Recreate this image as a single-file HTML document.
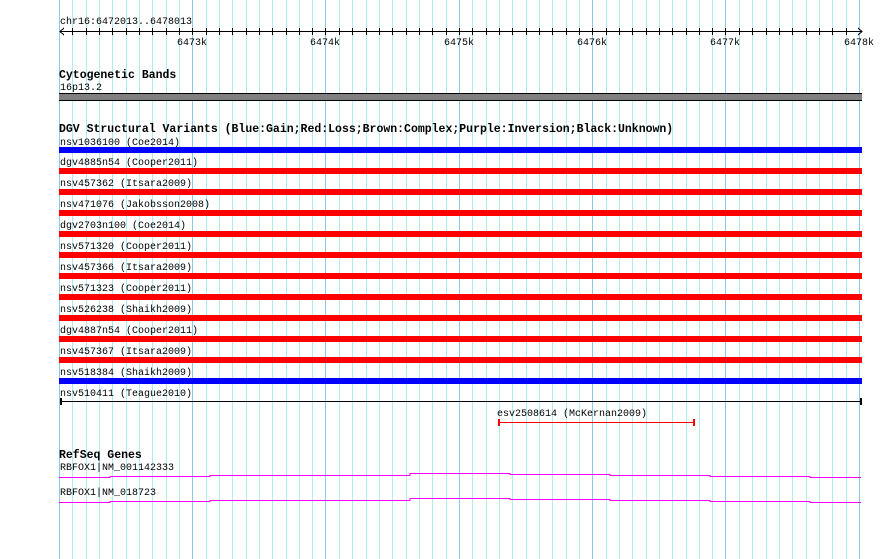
<!DOCTYPE html>
<html><head><meta charset="utf-8"><style>
html,body{margin:0;padding:0;background:#fff;width:890px;height:559px;overflow:hidden}
svg{display:block}
text{font-family:"Liberation Mono","DejaVu Sans Mono",monospace;font-size:10px;fill:#000}
.b{font-weight:bold;font-size:11.5px}
</style></head><body>
<svg width="890" height="559" xmlns="http://www.w3.org/2000/svg" shape-rendering="crispEdges">
<path stroke="#aeeaf0" stroke-width="1" fill="none" d="M72.5 0V559M86.5 0V559M99.5 0V559M112.5 0V559M126.5 0V559M139.5 0V559M152.5 0V559M166.5 0V559M179.5 0V559M206.5 0V559M219.5 0V559M232.5 0V559M246.5 0V559M259.5 0V559M272.5 0V559M286.5 0V559M299.5 0V559M312.5 0V559M339.5 0V559M352.5 0V559M366.5 0V559M379.5 0V559M392.5 0V559M406.5 0V559M419.5 0V559M432.5 0V559M446.5 0V559M472.5 0V559M486.5 0V559M499.5 0V559M512.5 0V559M526.5 0V559M539.5 0V559M552.5 0V559M566.5 0V559M579.5 0V559M606.5 0V559M619.5 0V559M632.5 0V559M646.5 0V559M659.5 0V559M672.5 0V559M686.5 0V559M699.5 0V559M712.5 0V559M739.5 0V559M752.5 0V559M766.5 0V559M779.5 0V559M792.5 0V559M806.5 0V559M819.5 0V559M832.5 0V559M846.5 0V559"/>
<path stroke="#8cc8ea" stroke-width="1" fill="none" d="M59.5 0V559M192.5 0V559M325.5 0V559M459.5 0V559M592.5 0V559M725.5 0V559M859.5 0V559"/>
<text x="60" y="24">chr16:6472013..6478013</text>
<line x1="60" y1="31.5" x2="862" y2="31.5" stroke="#000"/>
<path stroke="#000" fill="none" d="M72.5 28V35M86.5 28V35M99.5 28V35M112.5 28V35M126.5 28V35M139.5 28V35M152.5 28V35M166.5 28V35M179.5 28V35M192.5 28V35M206.5 28V35M219.5 28V35M232.5 28V35M246.5 28V35M259.5 28V35M272.5 28V35M286.5 28V35M299.5 28V35M312.5 28V35M325.5 28V35M339.5 28V35M352.5 28V35M366.5 28V35M379.5 28V35M392.5 28V35M406.5 28V35M419.5 28V35M432.5 28V35M446.5 28V35M459.5 28V35M472.5 28V35M486.5 28V35M499.5 28V35M512.5 28V35M526.5 28V35M539.5 28V35M552.5 28V35M566.5 28V35M579.5 28V35M592.5 28V35M606.5 28V35M619.5 28V35M632.5 28V35M646.5 28V35M659.5 28V35M672.5 28V35M686.5 28V35M699.5 28V35M712.5 28V35M725.5 28V35M739.5 28V35M752.5 28V35M766.5 28V35M779.5 28V35M792.5 28V35M806.5 28V35M819.5 28V35M832.5 28V35M846.5 28V35"/>
<polyline points="64,28 60,31.5 64,35" fill="none" stroke="#000"/>
<polyline points="858,28 862,31.5 858,35" fill="none" stroke="#000"/>
<g text-anchor="end">
<text x="207" y="45">6473k</text><text x="340" y="45">6474k</text><text x="474" y="45">6475k</text><text x="607" y="45">6476k</text><text x="740" y="45">6477k</text><text x="874" y="45">6478k</text>
</g>
<text class="b" x="59" y="78">Cytogenetic Bands</text>
<text x="60" y="90">16p13.2</text>
<rect x="59" y="93" width="803" height="8" fill="#000"/>
<rect x="59" y="94" width="803" height="6" fill="#808080"/>
<text class="b" x="59" y="132">DGV Structural Variants (Blue:Gain;Red:Loss;Brown:Complex;Purple:Inversion;Black:Unknown)</text>
<text x="60" y="145">nsv1036100 (Coe2014)</text>
<rect x="59" y="147" width="803" height="6" fill="#0000ff"/>
<text x="60" y="165">dgv4885n54 (Cooper2011)</text>
<rect x="59" y="168" width="803" height="6" fill="#ff0000"/>
<text x="60" y="186">nsv457362 (Itsara2009)</text>
<rect x="59" y="189" width="803" height="6" fill="#ff0000"/>
<text x="60" y="207">nsv471076 (Jakobsson2008)</text>
<rect x="59" y="210" width="803" height="6" fill="#ff0000"/>
<text x="60" y="228">dgv2703n100 (Coe2014)</text>
<rect x="59" y="231" width="803" height="6" fill="#ff0000"/>
<text x="60" y="249">nsv571320 (Cooper2011)</text>
<rect x="59" y="252" width="803" height="6" fill="#ff0000"/>
<text x="60" y="270">nsv457366 (Itsara2009)</text>
<rect x="59" y="273" width="803" height="6" fill="#ff0000"/>
<text x="60" y="291">nsv571323 (Cooper2011)</text>
<rect x="59" y="294" width="803" height="6" fill="#ff0000"/>
<text x="60" y="312">nsv526238 (Shaikh2009)</text>
<rect x="59" y="315" width="803" height="6" fill="#ff0000"/>
<text x="60" y="333">dgv4887n54 (Cooper2011)</text>
<rect x="59" y="336" width="803" height="6" fill="#ff0000"/>
<text x="60" y="354">nsv457367 (Itsara2009)</text>
<rect x="59" y="357" width="803" height="6" fill="#ff0000"/>
<text x="60" y="375">nsv518384 (Shaikh2009)</text>
<rect x="59" y="378" width="803" height="6" fill="#0000ff"/>
<text x="60" y="396">nsv510411 (Teague2010)</text>
<line x1="60" y1="401.5" x2="862" y2="401.5" stroke="#000"/>
<rect x="60" y="398" width="2" height="7" fill="#000"/>
<rect x="860" y="398" width="2" height="7" fill="#000"/>
<text x="497" y="416">esv2508614 (McKernan2009)</text>
<line x1="498" y1="422.5" x2="694" y2="422.5" stroke="#f00"/>
<rect x="498" y="419" width="2" height="7" fill="#f00"/>
<rect x="693" y="419" width="2" height="7" fill="#f00"/>
<text class="b" x="59" y="458">RefSeq Genes</text>
<text x="60" y="470">RBFOX1|NM_001142333</text>
<polyline fill="none" stroke="#ff00ff" points="59,477.5 110,477.5 110,476.5 210,476.5 210,475.5 410,475.5 410,473.5 510,473.5 510,474.5 610,474.5 610,475.5 710,475.5 710,476.5 810,476.5 810,477.5 861,477.5"/>
<text x="60" y="495">RBFOX1|NM_018723</text>
<polyline fill="none" stroke="#ff00ff" points="59,502.5 110,502.5 110,501.5 210,501.5 210,500.5 410,500.5 410,498.5 510,498.5 510,499.5 610,499.5 610,500.5 710,500.5 710,501.5 810,501.5 810,502.5 861,502.5"/>
</svg>
</body></html>
